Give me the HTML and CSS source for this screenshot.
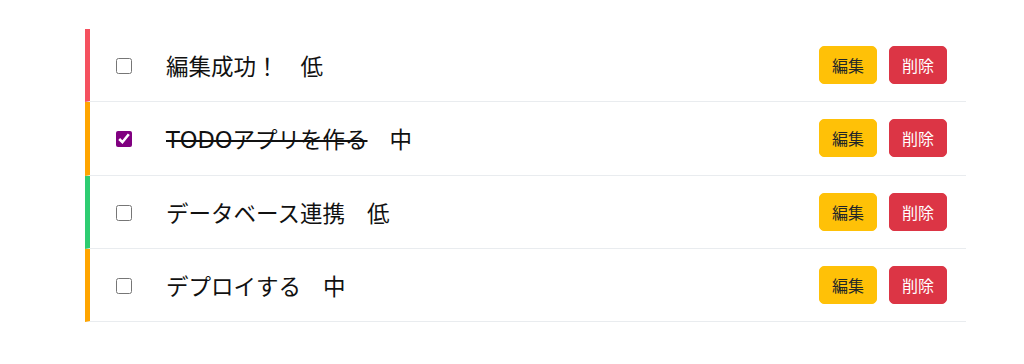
FILE: index.html
```html
<!DOCTYPE html>
<html lang="ja">
<head>
<meta charset="utf-8">
<title>TODO</title>
<link rel="stylesheet" href="styles.css">
</head>
<body>
<ul class="todo-list">
  <li class="todo-item prio-high">
    <input type="checkbox" class="todo-check">
    <span class="todo-text"><span class="todo-title">編集成功！</span><span class="todo-prio">低</span></span>
    <div class="todo-actions">
      <button class="btn btn-edit">編集</button>
      <button class="btn btn-delete">削除</button>
    </div>
  </li>
  <li class="todo-item prio-mid">
    <input type="checkbox" class="todo-check" checked>
    <span class="todo-text"><span class="todo-title done">TODOアプリを作る</span><span class="todo-prio">中</span></span>
    <div class="todo-actions">
      <button class="btn btn-edit">編集</button>
      <button class="btn btn-delete">削除</button>
    </div>
  </li>
  <li class="todo-item prio-low">
    <input type="checkbox" class="todo-check">
    <span class="todo-text"><span class="todo-title">データベース連携</span><span class="todo-prio">低</span></span>
    <div class="todo-actions">
      <button class="btn btn-edit">編集</button>
      <button class="btn btn-delete">削除</button>
    </div>
  </li>
  <li class="todo-item prio-mid">
    <input type="checkbox" class="todo-check">
    <span class="todo-text"><span class="todo-title">デプロイする</span><span class="todo-prio">中</span></span>
    <div class="todo-actions">
      <button class="btn btn-edit">編集</button>
      <button class="btn btn-delete">削除</button>
    </div>
  </li>
</ul>
</body>
</html>
```
FILE: styles.css
```css
html, body {
  margin: 0;
  padding: 0;
  background: #ffffff;
  font-family: "Noto Sans CJK JP", "Noto Sans", sans-serif;
  color: #111111;
}

.todo-list {
  list-style: none;
  margin: 29px 0 0 85px;
  padding: 0;
  width: 881px;
}

.todo-item {
  display: flex;
  align-items: center;
  height: 72.3px;
  padding: 0 19px 0 26px;
  border-left: 5px solid #f5515f;
  border-bottom: 1px solid #e9ecef;
  box-sizing: content-box;
}

.todo-item.prio-high { border-left-color: #f5515f; }
.todo-item.prio-mid { border-left-color: #ffa500; }
.todo-item.prio-low { border-left-color: #2ecc71; }

.todo-check {
  width: 16px;
  height: 16px;
  margin: 2px 34px 0 0;
  accent-color: #800080;
}

.todo-text {
  font-family: "Noto Sans CJK JP", sans-serif;
  font-size: 22.5px;
  line-height: 30px;
  margin-top: 2px;
  color: #111111;
}

.todo-title {
  font-family: "DejaVu Sans", "Noto Sans CJK JP", sans-serif;
}

.todo-title.done {
  text-decoration: line-through;
  text-decoration-thickness: 2px;
}

.todo-prio {
  margin-left: 22px;
}

.todo-actions {
  margin-left: auto;
  display: flex;
  gap: 12px;
}

.btn {
  font-family: "Noto Sans CJK JP", "Noto Sans", sans-serif;
  font-size: 16px;
  line-height: 24px;
  padding: 6px 12px;
  border: 1px solid transparent;
  border-radius: 5px;
  cursor: pointer;
}

.btn-edit {
  background: #ffc107;
  border-color: #ffc107;
  color: #212529;
}

.btn-delete {
  background: #dc3545;
  border-color: #dc3545;
  color: #ffffff;
}
```
